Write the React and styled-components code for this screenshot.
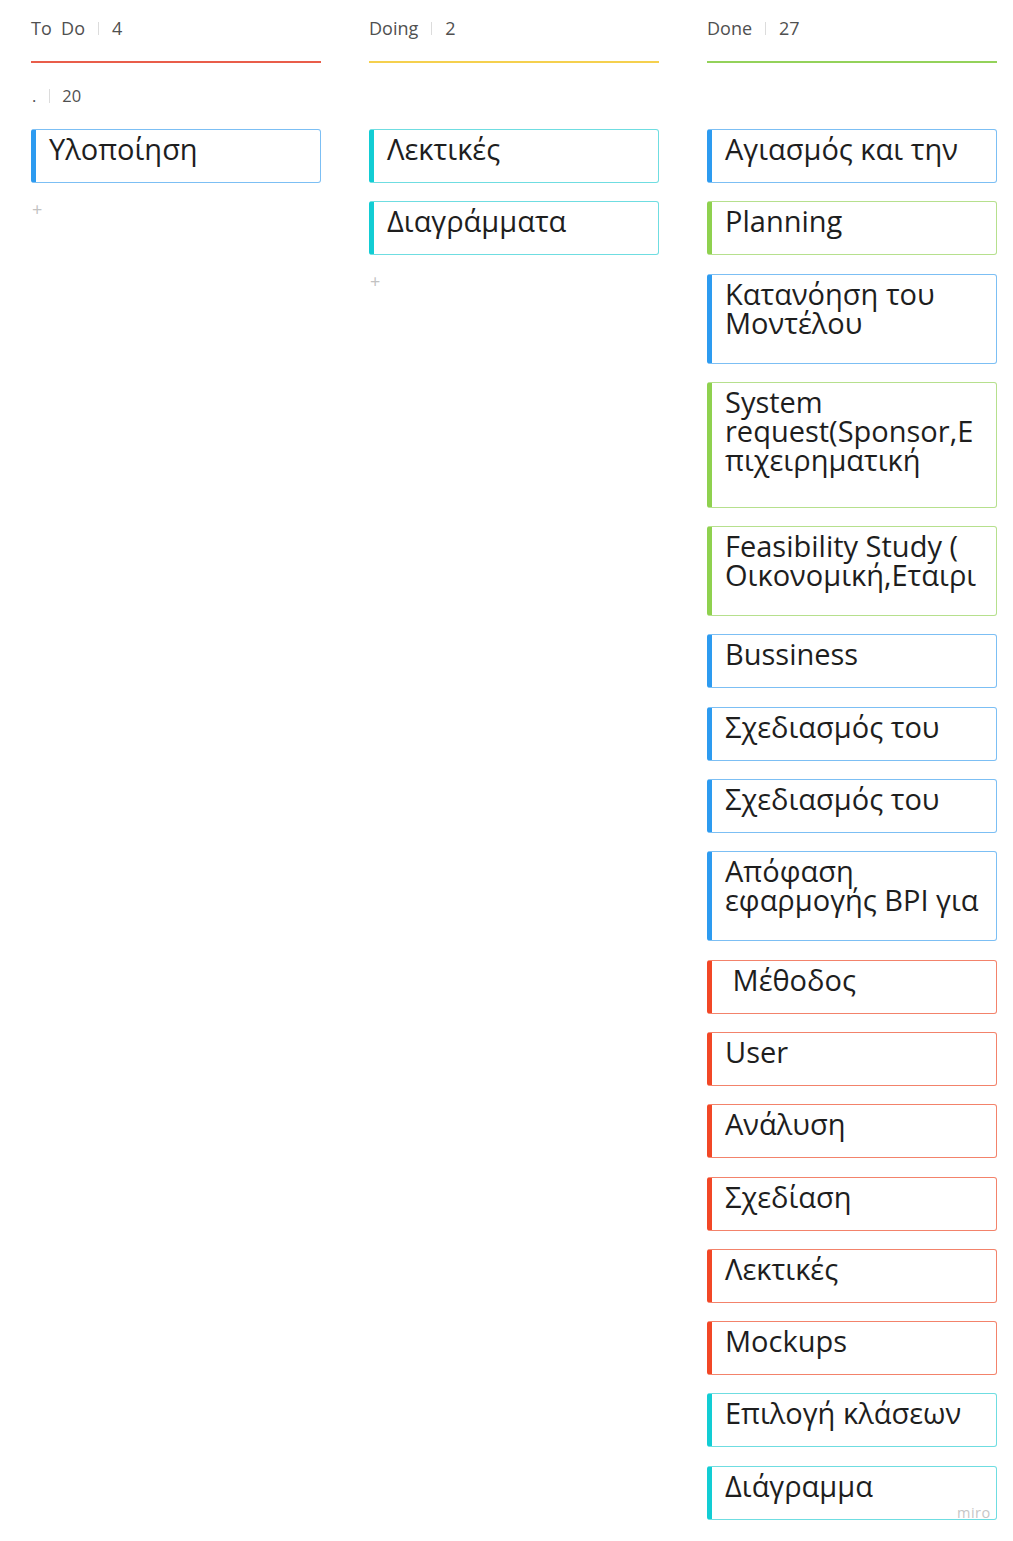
import React from "react";
import styled, { createGlobalStyle } from "styled-components";

const GlobalStyle = createGlobalStyle`
  html, body {
    margin: 0;
    padding: 0;
    background: #ffffff;
  }
  body {
    font-family: "Open Sans", "Noto Sans", "DejaVu Sans", sans-serif;
    color: #1f1f1f;
  }
`;

const COLORS = {
  red: { main: "#f24726", border: "#f3836b", line: "#e95d4a" },
  yellow: { main: "#fac710", border: "#fbd96a", line: "#f5d04e" },
  green: { main: "#8fd14f", border: "#b6e08d", line: "#93d25a" },
  blue: { main: "#2d9bf0", border: "#7cbff4", line: "#2d9bf0" },
  teal: { main: "#12cdd4", border: "#6fdde1", line: "#12cdd4" },
};

const Page = styled.div`
  position: relative;
  width: 1013px;
  min-height: 1541px;
  box-sizing: border-box;
  padding: 17px 0 0 31px;
`;

const Board = styled.div`
  display: grid;
  grid-template-columns: repeat(3, 290px);
  column-gap: 48px;
  align-items: start;
`;

const HeaderCell = styled.div`
  display: flex;
  flex-direction: column;
`;

const HeaderTitle = styled.div`
  display: flex;
  align-items: center;
  height: 22px;
  font-size: 18px;
  line-height: 22px;
  color: #505050;
  white-space: pre;
`;

const Sep = styled.span`
  display: inline-block;
  width: 1px;
  height: 13px;
  background: #dcdcdc;
  margin: 0 13px 0 13px;
`;

const Underline = styled.div`
  margin-top: 22px;
  height: 2px;
  background: ${(p) => COLORS[p.$color].line};
`;

const LaneLabel = styled.div`
  grid-column: 1 / -1;
  display: flex;
  align-items: center;
  height: 22px;
  margin-top: 22px;
  margin-bottom: 22px;
  font-size: 16.5px;
  line-height: 22px;
  color: #505050;
  padding-left: 1px;
`;

const LaneSep = styled(Sep)`
  margin: 0 12px 0 13px;
  height: 14px;
`;

const CardList = styled.div`
  display: flex;
  flex-direction: column;
  gap: 18.3px;
`;

const Card = styled.div`
  box-sizing: border-box;
  height: ${(p) => 18 + 36 * p.$lines}px;
  border: 1px solid ${(p) => COLORS[p.$color].border};
  border-left: 5px solid ${(p) => COLORS[p.$color].main};
  border-radius: 3px;
  background: #ffffff;
  padding: 4px 10px 0 13px;
  font-size: 29px;
  line-height: 29px;
  color: #1e1e1e;
  white-space: pre-wrap;
  overflow: hidden;
`;

const AddButton = styled.div`
  margin-top: 16px;
  padding-left: 1px;
  font-size: 18px;
  line-height: 20px;
  color: #c2c2c2;
`;

const Watermark = styled.div`
  position: absolute;
  left: 957px;
  top: 1504px;
  font-size: 14.5px;
  line-height: 18px;
  color: #c6c6c6;
  letter-spacing: 0.5px;
`;

const columns = [
  { title: "To \u00a0Do", count: 4, color: "red" },
  { title: "Doing", count: 2, color: "yellow" },
  { title: "Done", count: 27, color: "green" },
];

const lanes = [
  [{ text: "Υλοποίηση", color: "blue", lines: 1 }],
  [
    { text: "Λεκτικές", color: "teal", lines: 1 },
    { text: "Διαγράμματα", color: "teal", lines: 1 },
  ],
  [
    { text: "Αγιασμός και την", color: "blue", lines: 1 },
    { text: "Planning", color: "green", lines: 1 },
    { text: "Κατανόηση του\nΜοντέλου", color: "blue", lines: 2 },
    { text: "System\nrequest(Sponsor,E\nπιχειρηματική", color: "green", lines: 3 },
    { text: "Feasibility Study (\nΟικονομική,Εταιρι", color: "green", lines: 2 },
    { text: "Bussiness", color: "blue", lines: 1 },
    { text: "Σχεδιασμός του", color: "blue", lines: 1 },
    { text: "Σχεδιασμός του", color: "blue", lines: 1 },
    { text: "Απόφαση\nεφαρμογής BPI για", color: "blue", lines: 2 },
    { text: " Μέθοδος", color: "red", lines: 1 },
    { text: "User", color: "red", lines: 1 },
    { text: "Ανάλυση", color: "red", lines: 1 },
    { text: "Σχεδίαση", color: "red", lines: 1 },
    { text: "Λεκτικές", color: "red", lines: 1 },
    { text: "Mockups", color: "red", lines: 1 },
    { text: "Επιλογή κλάσεων", color: "teal", lines: 1 },
    { text: "Διάγραμμα", color: "teal", lines: 1 },
  ],
];

export default function App() {
  return (
    <>
      <GlobalStyle />
      <Page>
        <Board>
          {columns.map((c) => (
            <HeaderCell key={c.title}>
              <HeaderTitle>
                {c.title}
                <Sep />
                {c.count}
              </HeaderTitle>
              <Underline $color={c.color} />
            </HeaderCell>
          ))}
          <LaneLabel>
            .
            <LaneSep />
            20
          </LaneLabel>
          {lanes.map((cards, i) => (
            <div key={i}>
              <CardList>
                {cards.map((card, j) => (
                  <Card key={j} $color={card.color} $lines={card.lines}>
                    {card.text}
                  </Card>
                ))}
              </CardList>
              {i < 2 && <AddButton>+</AddButton>}
            </div>
          ))}
        </Board>
        <Watermark>miro</Watermark>
      </Page>
    </>
  );
}
